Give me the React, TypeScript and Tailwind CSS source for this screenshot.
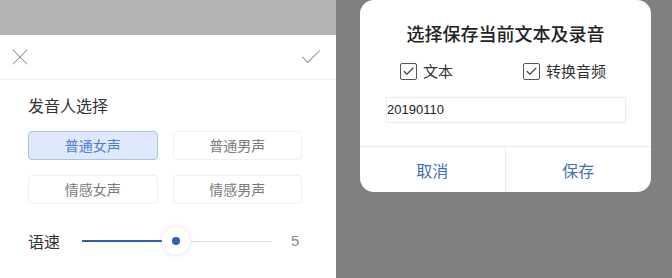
import { X, Check } from 'lucide-react'

const font = { fontFamily: '"Noto Sans CJK SC", "Noto Sans", sans-serif' }

const voices = [
  { name: '普通女声', active: true },
  { name: '普通男声', active: false },
  { name: '情感女声', active: false },
  { name: '情感男声', active: false },
]

function Box() {
  return (
    <span className="flex h-[17px] w-[17px] items-center justify-center rounded-[2px] border-[1.5px] border-[#555]">
      <Check size={13} strokeWidth={2.2} className="text-[#444]" />
    </span>
  )
}

function VoicePanel() {
  return (
    <div className="flex w-[336px] flex-col bg-white">
      <div className="h-[35px] bg-[#b3b3b3]" />
      <div className="flex h-[45px] items-center justify-between border-b border-[#efefef] pl-[6px] pr-[12px]">
        <X size={28} strokeWidth={0.9} className="text-[#8a8a8a]" />
        <Check size={26} strokeWidth={0.95} className="text-[#8a8a8a]" />
      </div>
      <div className="pl-[28px] pr-[34px] pt-[14px]">
        <div className="text-[16px] leading-[22px] text-[#333]">发音人选择</div>
        <div className="mt-[15px] grid grid-cols-2 gap-x-[15px] gap-y-[15px]">
          {voices.map(v => (
            <div
              key={v.name}
              className={
                v.active
                  ? 'flex h-[29px] items-center justify-center rounded-[4px] border border-[#a9c2ea] bg-[#dfe9fb] text-[14px] text-[#4a7dcf]'
                  : 'flex h-[29px] items-center justify-center rounded-[4px] border border-[#efefef] bg-white text-[14px] text-[#7a7a7a]'
              }
            >
              {v.name}
            </div>
          ))}
        </div>
        <div className="mt-[22px] flex h-[30px] items-center">
          <span className="w-[54px] text-[16px] text-[#333]">语速</span>
          <div className="relative h-[30px] w-[190px]">
            <div className="absolute left-0 right-0 top-[14.5px] h-px bg-[#dcdcdc]" />
            <div className="absolute left-0 top-[14px] h-[2px] w-[94px] bg-[#2d5db4]" />
            <div className="absolute left-[80px] top-[1px] flex h-[28px] w-[28px] items-center justify-center rounded-full bg-white shadow-[0_0_4px_rgba(180,170,230,0.45)]">
              <div className="h-[8px] w-[8px] rounded-full bg-[#2f5fc0]" />
            </div>
          </div>
          <span className="ml-[19px] text-[15px] text-[#888]" style={{ fontFamily: '"Liberation Sans", sans-serif' }}>5</span>
        </div>
      </div>
    </div>
  )
}

function SaveDialog() {
  return (
    <div className="flex-1 bg-[#808080] pl-[24px]">
      <div className="flex w-[291px] flex-col overflow-hidden rounded-[14px] bg-white">
        <div className="pt-[21px] text-center text-[18px] font-medium leading-[24px] text-[#222]">选择保存当前文本及录音</div>
        <div className="mt-[15px] flex h-[22px] items-center text-[15px] text-[#333]">
          <div className="ml-[40px] flex items-center gap-[6px]">
            <Box />
            <span>文本</span>
          </div>
          <div className="ml-[70px] flex items-center gap-[6px]">
            <Box />
            <span>转换音频</span>
          </div>
        </div>
        <div
          className="ml-[26px] mt-[15px] flex h-[26px] w-[240px] items-center border border-[#ececec] text-[13px] text-[#222]"
          style={{ fontFamily: '"Liberation Sans", sans-serif' }}
        >
          20190110
        </div>
        <div className="mt-[23px] grid h-[46px] grid-cols-2 border-t border-[#ececec] text-[16px] text-[#3f6fb3]">
          <div className="flex items-center justify-center border-r border-[#ececec]">取消</div>
          <div className="flex items-center justify-center">保存</div>
        </div>
      </div>
    </div>
  )
}

export default function App() {
  return (
    <div className="flex h-[278px] w-[672px] overflow-hidden" style={font}>
      <VoicePanel />
      <SaveDialog />
    </div>
  )
}
